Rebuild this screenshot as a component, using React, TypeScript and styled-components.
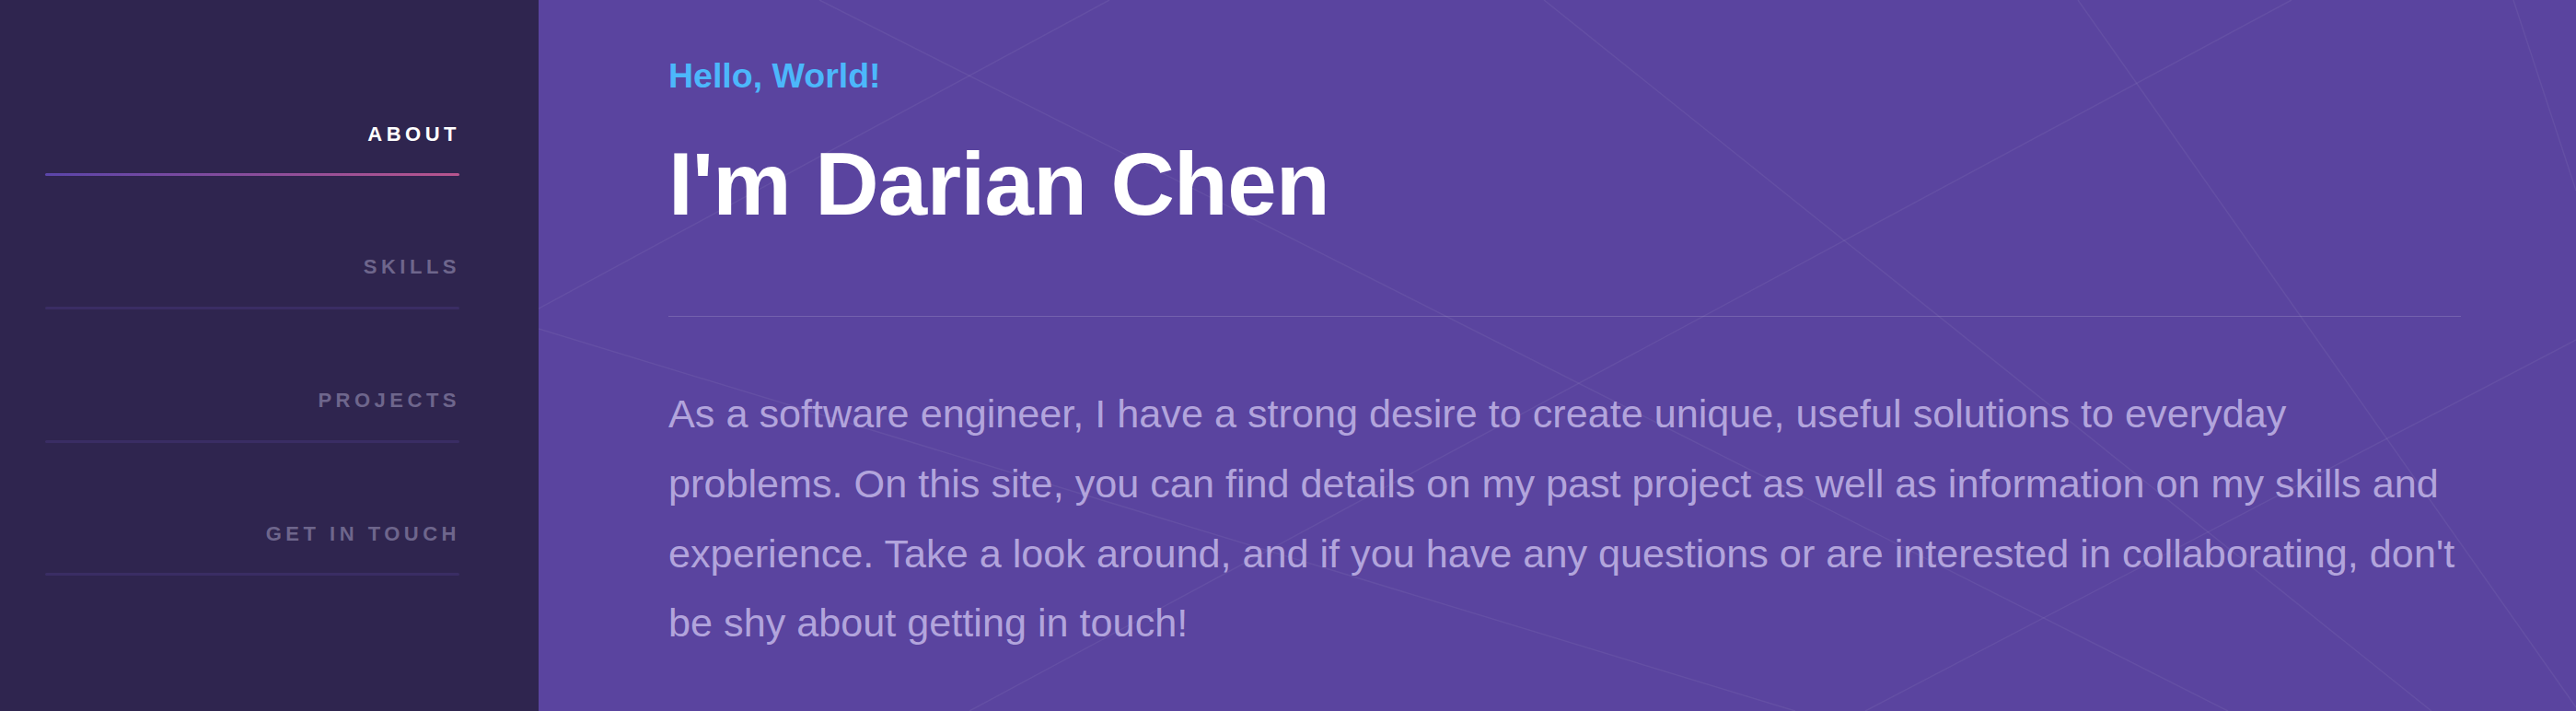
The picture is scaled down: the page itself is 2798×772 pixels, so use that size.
import React from "react";
import styled, { createGlobalStyle } from "styled-components";

const GlobalStyle = createGlobalStyle`
  html, body {
    margin: 0;
    padding: 0;
    background: #5a449f;
  }
  * { box-sizing: border-box; }
  body {
    font-family: "Liberation Sans", Arial, sans-serif;
  }
`;

const Page = styled.div`
  display: flex;
  width: 100%;
  height: 772px;
  overflow: hidden;
`;

const Sidebar = styled.aside`
  flex: 0 0 585px;
  height: 100%;
  background: #2f254f;
  padding: 134.7px 86px 0 49px;
`;

const NavList = styled.nav`
  display: flex;
  flex-direction: column;
  gap: 88.07px;
`;

const NavItem = styled.a`
  display: flex;
  flex-direction: column;
  align-items: flex-end;
  gap: 31.6px;
  text-decoration: none;
  cursor: pointer;
`;

const NavLabel = styled.span<{ $active?: boolean }>`
  display: block;
  font-size: 22px;
  line-height: 22px;
  font-weight: 700;
  letter-spacing: 4.5px;
  margin-right: -1px;
  text-transform: uppercase;
  color: ${(p) => (p.$active ? "#ffffff" : "#6e668c")};
`;

const NavBar = styled.span<{ $active?: boolean }>`
  display: block;
  width: 100%;
  height: 3px;
  border-radius: 2px;
  background: ${(p) =>
    p.$active ? "linear-gradient(90deg, #5b45aa 0%, #b8558e 100%)" : "#3a2d64"};
`;

const Main = styled.main`
  position: relative;
  flex: 1 1 auto;
  height: 100%;
  background: #5a449f;
  overflow: hidden;
  padding: 59.5px 125px 0 141px;
`;

const Backdrop = styled.svg`
  position: absolute;
  inset: 0;
  width: 100%;
  height: 100%;
  z-index: 0;
  pointer-events: none;
`;

const Content = styled.section`
  position: relative;
  z-index: 1;
  display: flex;
  flex-direction: column;
`;

const Greeting = styled.h2`
  margin: 0;
  font-size: 37.5px;
  line-height: 45px;
  font-weight: 700;
  color: #4cb7fb;
`;

const Title = styled.h1`
  margin: 37.3px 0 0;
  font-size: 96px;
  line-height: 115.2px;
  font-weight: 700;
  letter-spacing: -0.6px;
  color: #ffffff;
`;

const Divider = styled.hr`
  margin: 85.7px 0 0;
  border: 0;
  height: 1px;
  background: rgba(255, 255, 255, 0.16);
`;

const Intro = styled.p`
  margin: 68.8px 0 0;
  width: calc(100% + 7px);
  font-size: 43.2px;
  line-height: 75.6px;
  color: #b2a4dc;
`;

const lines: [number, number, number, number][] = [
  [305, 0, 1835, 772],
  [620, 0, 0, 335],
  [0, 357, 1365, 772],
  [468, 772, 1904, 0],
  [1092, 0, 2056, 772],
  [1672, 0, 2213, 768],
  [2145, 0, 2213, 207],
  [2213, 369, 1441, 772],
];

const navItems = ["About", "Skills", "Projects", "Get in touch"];

export default function App() {
  return (
    <>
      <GlobalStyle />
      <Page>
        <Sidebar>
          <NavList>
            {navItems.map((item, i) => (
              <NavItem key={item}>
                <NavLabel $active={i === 0}>{item}</NavLabel>
                <NavBar $active={i === 0} />
              </NavItem>
            ))}
          </NavList>
        </Sidebar>
        <Main>
          <Backdrop viewBox="0 0 2213 772" preserveAspectRatio="none">
            {lines.map(([x1, y1, x2, y2], i) => (
              <line
                key={i}
                x1={x1}
                y1={y1}
                x2={x2}
                y2={y2}
                stroke="rgba(255,255,255,0.06)"
                strokeWidth={1.5}
              />
            ))}
          </Backdrop>
          <Content>
            <Greeting>Hello, World!</Greeting>
            <Title>I'm Darian Chen</Title>
            <Divider />
            <Intro>
              As a software engineer, I have a strong desire to create unique, useful
              solutions to everyday problems. On this site, you can find details on my
              past project as well as information on my skills and experience. Take a
              look around, and if you have any questions or are interested in
              collaborating, don't be shy about getting in touch!
            </Intro>
          </Content>
        </Main>
      </Page>
    </>
  );
}
